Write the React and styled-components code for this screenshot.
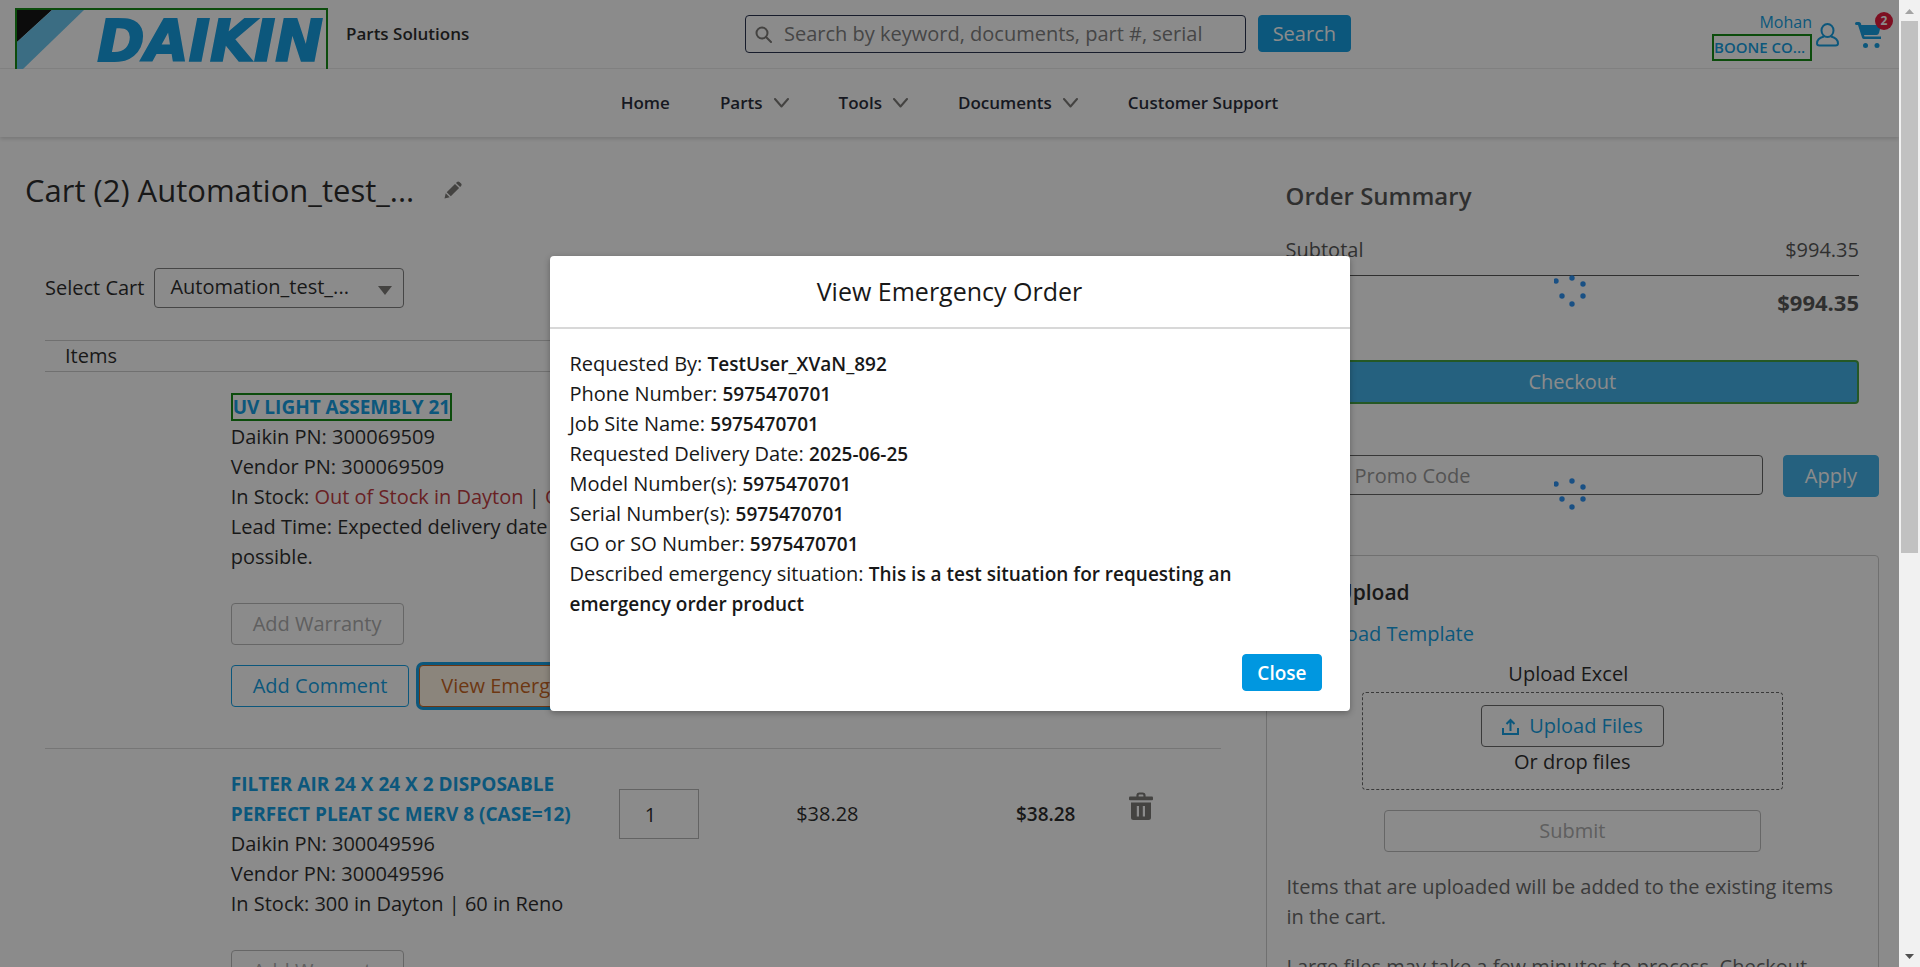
import React from "react";
import styled, { createGlobalStyle } from "styled-components";

const BLUE = "#0097e0";
const INK = "#181818";
const GREEN = "#008000";

const GlobalStyle = createGlobalStyle`
  * { box-sizing: border-box; }
  body { margin: 0; background: #fff; overflow: hidden; }
  body, button, input, select {
    font-family: "Open Sans", "Noto Sans", sans-serif;
    font-size: 20px;
    line-height: 30px;
    color: ${INK};
  }
  h1, h2, h3, p { margin: 0; font-weight: 400; }
  a { color: ${BLUE}; text-decoration: none; }
  strong { font-size: 19px; font-weight: 600; }
`;

const Shell = styled.div`
  display: flex;
  height: 100vh;
  overflow: hidden;
`;
const Page = styled.div`
  position: relative;
  flex: 1;
  min-width: 0;
  overflow: hidden;
`;

/* ---------- header ---------- */
const TopBar = styled.header`
  display: grid;
  grid-template-columns: minmax(0, 745fr) minmax(0, 606fr) minmax(0, 548fr);
  height: 69px;
  border-bottom: 1px solid #ececec;
`;
const Brand = styled.div`
  display: flex;
  gap: 18px;
  padding: 8px 0 0 15px;
  font-size: 17px;
  font-weight: 600;
  line-height: 52px;
`;
const LogoLink = styled.a`
  display: block;
  width: 313px;
  height: 61px;
  border: 2px solid ${GREEN};
  border-bottom: 0;
  svg { display: block; }
`;
const SearchForm = styled.form`
  display: flex;
  align-items: flex-start;
  gap: 12px;
  padding-top: 15px;
`;
const SearchBox = styled.label`
  display: flex;
  align-items: center;
  gap: 12px;
  flex: 1;
  min-width: 0;
  height: 38px;
  padding: 0 38px 0 9px;
  border: 1px solid #16213f;
  border-radius: 4px;
  svg { flex: none; }
`;
const BareInput = styled.input`
  flex: 1;
  min-width: 0;
  padding: 0;
  border: 0;
  outline: 0;
  background: none;
  &::placeholder { color: #747474; opacity: 1; }
`;
const Button = styled.button`
  display: inline-flex;
  align-items: center;
  justify-content: center;
  height: ${(p) => p.$height || 42}px;
  padding: 0 ${(p) => p.$pad || 21}px;
  border: 1px solid ${(p) => p.$border || BLUE};
  border-radius: 4px;
  background: ${(p) => p.$bg || "transparent"};
  color: ${(p) => p.$color || BLUE};
  white-space: nowrap;
`;
const UserArea = styled.div`
  display: flex;
  justify-content: flex-end;
  gap: 4px;
  padding: 11px 18px 0 0;
`;
const UserNames = styled.div`
  display: flex;
  flex-direction: column;
  align-items: flex-end;
  width: 100px;
  font-size: 16px;
  line-height: 23px;
`;
const Account = styled.a`
  width: 100%;
  height: 27px;
  border: 2px solid ${GREEN};
  font-size: 15px;
  font-weight: 600;
`;
const IconLink = styled.a`
  position: relative;
  display: block;
  height: 26px;
  margin: ${(p) => p.$margin};
  svg { display: block; }
`;
const Badge = styled.span`
  position: absolute;
  top: -10px;
  right: -12px;
  width: 18px;
  height: 18px;
  border-radius: 9px;
  background: #e3062b;
  color: #fff;
  font-size: 12px;
  font-weight: 700;
  line-height: 18px;
  text-align: center;
`;
const Nav = styled.nav`
  display: flex;
  align-items: center;
  justify-content: center;
  gap: 50px;
  height: 68px;
  box-shadow: 0 2px 4px rgba(0, 0, 0, 0.16);
`;
const NavItem = styled.a`
  display: flex;
  align-items: center;
  gap: 11px;
  color: #14182a;
  font-size: 17px;
  font-weight: 600;
`;

/* ---------- cart ---------- */
const Main = styled.main`
  display: grid;
  grid-template-columns: minmax(0, 67fr) minmax(0, 33fr);
  padding: 0 20px;
`;
const CartColumn = styled.section`
  padding: 33px 45px 0 25px;
`;
const TitleRow = styled.div`
  display: flex;
  align-items: center;
  gap: 30px;
  margin: 0 0 58px -20px;
`;
const Title = styled.h1`
  font-size: 31px;
  line-height: 40px;
`;
const IconButton = styled.button`
  display: block;
  padding: 0;
  border: 0;
  background: none;
  line-height: 0;
`;
const PickerRow = styled.div`
  display: flex;
  align-items: center;
  gap: 10px;
  margin-bottom: 32px;
`;
const Picker = styled.div`
  position: relative;
  width: 250px;
  svg { position: absolute; right: 12px; top: 18px; pointer-events: none; }
`;
const PickerSelect = styled.select`
  display: block;
  width: 100%;
  height: 40px;
  padding: 0 36px 2px 15px;
  border: 1px solid #747474;
  border-radius: 4px;
  background: transparent;
  appearance: none;
`;
const Items = styled.table`
  width: 100%;
  table-layout: fixed;
  border-collapse: collapse;
  th, td { padding: 0; text-align: left; vertical-align: top; font-weight: 400; }
  thead tr { border-top: 1px solid #c9c9c9; border-bottom: 1px solid #c9c9c9; }
  tbody tr { border-bottom: 1px solid #d4d4d4; }
  th:first-child { padding-left: 20px; }
  thead th { height: 31px; }
`;
const Cell = styled.td`
  && { padding-top: ${(p) => p.$top || 20}px; }
`;
const Details = styled.div`
  margin-bottom: 31px;
  white-space: nowrap;
`;
const ProductLink = styled.a`
  display: inline-block;
  font-size: 19px;
  font-weight: 700;
  line-height: 30px;
  vertical-align: top;
`;
const MarkedLink = styled(ProductLink)`
  height: 28px;
  margin: 1px 0;
  border: 2px solid ${GREEN};
  line-height: 24px;
`;
const Red = styled.span`
  color: #ba2a2f;
`;
const Actions = styled.div`
  display: flex;
  gap: 10px;
  margin-bottom: ${(p) => p.$bottom || 20}px;
`;
const EmergencyButton = styled(Button)`
  box-shadow: 0 0 0 3px ${BLUE};
`;
const Quantity = styled.input`
  display: block;
  width: 80px;
  height: 50px;
  padding: 0 25px;
  border: 1px solid #aeaeae;
  background: transparent;
`;

/* ---------- sidebar ---------- */
const Sidebar = styled.aside`
  padding-top: 23px;
`;
const Busy = styled.div`
  position: absolute;
  inset: 0;
  display: flex;
  align-items: center;
  justify-content: center;
  background: rgba(255, 255, 255, 0.2);
`;
const Summary = styled.section`
  position: relative;
  height: 260px;
  padding: 20px 20px 0;
`;
const SummaryTitle = styled.h2`
  margin-bottom: 23px;
  font-size: 24px;
  font-weight: 600;
  line-height: 32px;
`;
const AmountRow = styled.div`
  display: flex;
  justify-content: space-between;
  padding-bottom: ${(p) => p.$gap || 0}px;
  border-bottom: ${(p) => (p.$rule ? `1px solid ${INK}` : 0)};
`;
const Total = styled.b`
  margin: 11px 0 43px auto;
  font-size: 22px;
  font-weight: 700;
`;
const Checkout = styled(Button)`
  width: 100%;
  border-width: 2px;
`;
const Promo = styled.section`
  position: relative;
  display: flex;
  gap: 20px;
  height: 125px;
  margin-top: 10px;
  padding: 25px 0 0 20px;
`;
const PromoInput = styled.input`
  flex: 1;
  min-width: 0;
  height: 40px;
  padding: 0 16px 0 68px;
  border: 1px solid #2e2e2e;
  border-radius: 4px;
  background: transparent;
  &::placeholder { color: #747474; opacity: 1; }
`;
const UploadCard = styled.section`
  display: flex;
  flex-direction: column;
  align-items: stretch;
  padding: 21px 20px 20px;
  border: 1px solid #c9c9c9;
  border-radius: 4px;
`;
const UploadTitle = styled.h3`
  margin-bottom: 12px;
  font-size: 21px;
  font-weight: 600;
`;
const UploadLabel = styled.div`
  margin-top: 10px;
  padding-right: 8px;
  text-align: center;
`;
const DropZone = styled.div`
  display: flex;
  flex-direction: column;
  align-items: center;
  height: 98px;
  margin: 3px 75px 20px;
  padding-top: 12px;
  border: 1px dashed #5c5c5c;
  border-radius: 4px;
`;
const Submit = styled(Button)`
  margin: 0 97px 20px;
`;
const Note = styled.p`
  margin-bottom: 20px;
  padding-right: 20px;
  color: #5c5c5c;
`;

/* ---------- modal ---------- */
const Backdrop = styled.div`
  position: absolute;
  inset: 0;
  display: flex;
  align-items: center;
  justify-content: center;
  background: rgba(24, 24, 24, 0.5);
`;
const Dialog = styled.div`
  width: 800px;
  max-width: 90%;
  border-radius: 4px;
  background: #fff;
  box-shadow: 0 2px 6px rgba(0, 0, 0, 0.3);
`;
const DialogTitle = styled.h2`
  padding: 20px 0 21px;
  border-bottom: 2px solid #d8d8d8;
  font-size: 25px;
  text-align: center;
`;
const DialogBody = styled.div`
  padding: 20px 20px 0;
`;
const DialogFooter = styled.div`
  display: flex;
  justify-content: flex-end;
  padding: 35px 28px 20px 0;
`;
const CloseButton = styled(Button)`
  font-size: 19px;
  font-weight: 600;
`;

/* ---------- scroll bar ---------- */
const ScrollTrack = styled.div`
  display: flex;
  flex-direction: column;
  align-items: center;
  width: 21px;
  padding: 9px 2px 8px;
  background: #f1f1f1;
  svg { flex: none; }
`;
const ScrollThumb = styled.div`
  width: 17px;
  height: 56%;
  margin: 7px 0 auto;
  background: #c1c1c1;
`;

const Chevron = () => (
  <svg width="15" height="10" viewBox="0 0 15 10" fill="none" stroke="#706e6b" strokeWidth="2">
    <path d="M1 1l6.500 7.500L14 1" strokeLinecap="round" strokeLinejoin="round" />
  </svg>
);

const Logo = () => (
  <svg width="309" height="59" viewBox="0 0 309 59" aria-label="Daikin">
    <path d="M0 0h35L0 32z" fill="#000" />
    <path d="M35 0h32L6 59H0V32z" fill="#5ec3ee" />
    <text
      x="306"
      y="51"
      textAnchor="end"
      fontFamily="DejaVu Sans"
      fontWeight="700"
      fontStyle="italic"
      fontSize="57"
      fill={BLUE}
      stroke={BLUE}
      strokeWidth="2"
    >
      DAIKIN
    </text>
  </svg>
);

const Spinner = () => (
  <Busy>
    <svg width="36" height="36" viewBox="-18 -18 36 36" fill="#1b88f0">
      <circle cx="-16" cy="-9" r="2.700" />
      <circle cx="0" cy="-12" r="2.700" />
      <circle cx="11" cy="-6" r="2.700" />
      <circle cx="11" cy="6" r="2.700" />
      <circle cx="0" cy="14" r="2.700" />
      <circle cx="-10" cy="6" r="2.700" />
    </svg>
  </Busy>
);

const Trash = () => (
  <svg width="24" height="28" viewBox="0 0 24 28">
    <path d="M8.500 5V3.500a2 2 0 0 1 2-2h3a2 2 0 0 1 2 2V5" fill="none" stroke="#706e6b" strokeWidth="2.200" />
    <rect x="0" y="4.500" width="24" height="3.800" rx="1" fill="#706e6b" />
    <path
      fillRule="evenodd"
      d="M2 10.500h20V25.500a2.500 2.500 0 0 1-2.500 2.500h-15A2.500 2.500 0 0 1 2 25.500zM7.800 14v10.500h2.200V14zM13.800 14v10.500H16V14z"
      fill="#706e6b"
    />
  </svg>
);

const navItems = [
  ["Home", false],
  ["Parts", true],
  ["Tools", true],
  ["Documents", true],
  ["Customer Support", false],
];

const request = [
  ["Requested By:", "TestUser_XVaN_892"],
  ["Phone Number:", "5975470701"],
  ["Job Site Name:", "5975470701"],
  ["Requested Delivery Date:", "2025-06-25"],
  ["Model Number(s):", "5975470701"],
  ["Serial Number(s):", "5975470701"],
  ["GO or SO Number:", "5975470701"],
  ["Described emergency situation:", "This is a test situation for requesting an emergency order product"],
];

function AmountCells({ price, name }) {
  return (
    <>
      <Cell $top={40}>
        <Quantity defaultValue="1" aria-label={`Quantity of ${name}`} />
      </Cell>
      <Cell $top={50}>{price}</Cell>
      <Cell $top={50}>
        <strong>{price}</strong>
      </Cell>
      <Cell $top={43}>
        <IconButton aria-label={`Remove ${name}`}>
          <Trash />
        </IconButton>
      </Cell>
    </>
  );
}

function WarrantyAction() {
  return (
    <Actions>
      <Button $border="#b4b4b4" $color="#a6a6a6">Add Warranty</Button>
    </Actions>
  );
}

function Header() {
  return (
    <>
      <TopBar>
        <Brand>
          <LogoLink href="#home"><Logo /></LogoLink>
          <span>Parts Solutions</span>
        </Brand>
        <SearchForm>
          <SearchBox>
            <svg width="17" height="17" viewBox="0 0 17 17" fill="none" stroke="#706e6b" strokeWidth="2">
              <circle cx="7" cy="7" r="5.500" />
              <path d="M11 11l5 5" strokeLinecap="round" />
            </svg>
            <BareInput
              type="text"
              aria-label="Search"
              placeholder="Search by keyword, documents, part #, serial #"
            />
          </SearchBox>
          <Button type="button" $height={37} $pad={14} $bg={BLUE} $color="#fff">Search</Button>
        </SearchForm>
        <UserArea>
          <UserNames>
            <a href="#user">Mohan</a>
            <Account href="#account">BOONE CO...</Account>
          </UserNames>
          <IconLink href="#profile" aria-label="Profile" $margin="12px 12px 0 0">
            <svg width="23" height="24" viewBox="0 0 23 24" fill="none" stroke={BLUE} strokeWidth="2">
              <ellipse cx="11.500" cy="7.500" rx="6" ry="6.500" />
              <path d="M8 13.500C4 14.500 1 17 1 20.500 1 22 2 22.500 3.500 22.500h16c1.500 0 2.500-.5 2.500-2 0-3.500-3-6-7-7" />
            </svg>
          </IconLink>
          <IconLink href="#cart" aria-label="Cart" $margin="11px 0 0 0">
            <svg width="26" height="26" viewBox="0 0 26 26" fill={BLUE}>
              <path d="M0 1.500Q0 0 1.500 0H4q1.500 0 2 1.500L6.300 3H26l-2 8q-.5 2-2.500 2H9l.5 1.500H26V17H9q-1.500 0-2-1.500L3 3H1.500Q0 3 0 1.500z" />
              <circle cx="10.500" cy="23.500" r="2.500" />
              <circle cx="22" cy="23.500" r="2.500" />
            </svg>
            <Badge>2</Badge>
          </IconLink>
        </UserArea>
      </TopBar>
      <Nav>
        {navItems.map(([label, menu]) => (
          <NavItem key={label} href="#menu">
            {label}
            {menu && <Chevron />}
          </NavItem>
        ))}
      </Nav>
    </>
  );
}

function Cart() {
  return (
    <CartColumn>
      <TitleRow>
        <Title>Cart (2) Automation_test_...</Title>
        <IconButton aria-label="Rename cart">
          <svg width="18" height="18" viewBox="0 0 18 18" fill="#706e6b">
            <path d="M0.500 17.500l1.200-5.200 4 4zM2.700 11.200L11 2.900l4.100 4.100-8.300 8.300zM12 1.900l1-1q1.200-1 2.400 0l1.700 1.700q1 1.200 0 2.400l-1 1z" />
          </svg>
        </IconButton>
      </TitleRow>
      <PickerRow>
        <label htmlFor="cart-picker">Select Cart</label>
        <Picker>
          <PickerSelect id="cart-picker">
            <option>Automation_test_...</option>
          </PickerSelect>
          <svg width="14" height="9" viewBox="0 0 14 9" fill="#706e6b"><path d="M0 0h14L7 9z" /></svg>
        </Picker>
      </PickerRow>
      <Items>
        <colgroup>
          <col style={{ width: "15.8%" }} />
          <col style={{ width: "33%" }} />
          <col style={{ width: "15.1%" }} />
          <col style={{ width: "18.7%" }} />
          <col style={{ width: "9.6%" }} />
          <col />
        </colgroup>
        <thead>
          <tr>
            <th colSpan={2}>Items</th>
            <th>Qty</th>
            <th>Price</th>
            <th>Total</th>
            <th />
          </tr>
        </thead>
        <tbody>
          <tr>
            <td />
            <Cell>
              <Details>
                <MarkedLink href="#item">UV LIGHT ASSEMBLY 21</MarkedLink>
                <div>Daikin PN: 300069509</div>
                <div>Vendor PN: 300069509</div>
                <div>In Stock: <Red>Out of Stock in Dayton</Red> | <Red>Out of Stock in Reno</Red></div>
                <div>Lead Time: Expected delivery date is not<br />possible.</div>
              </Details>
              <WarrantyAction />
              <Actions $bottom={41}>
                <Button>Add Comment</Button>
                <EmergencyButton $border="#c2570c" $color="#c2570c" $bg="#fff3e0">
                  View Emergency Order
                </EmergencyButton>
              </Actions>
            </Cell>
            <AmountCells price="$956.07" name="UV light assembly" />
          </tr>
          <tr>
            <td />
            <Cell>
              <Details>
                <ProductLink href="#item">
                  FILTER AIR 24 X 24 X 2 DISPOSABLE<br />PERFECT PLEAT SC MERV 8 (CASE=12)
                </ProductLink>
                <div>Daikin PN: 300049596</div>
                <div>Vendor PN: 300049596</div>
                <div>In Stock: 300 in Dayton | 60 in Reno</div>
              </Details>
              <WarrantyAction />
            </Cell>
            <AmountCells price="$38.28" name="air filter" />
          </tr>
        </tbody>
      </Items>
    </CartColumn>
  );
}

function OrderPanel() {
  return (
    <Sidebar>
      <Summary>
        <SummaryTitle>Order Summary</SummaryTitle>
        <AmountRow $rule $gap={10}>
          <span>Subtotal</span>
          <span>$994.35</span>
        </AmountRow>
        <AmountRow>
          <Total>$994.35</Total>
        </AmountRow>
        <Checkout $height={44} $border={GREEN} $bg={BLUE} $color="#fff">Checkout</Checkout>
        <Spinner />
      </Summary>
      <Promo>
        <PromoInput aria-label="Promo Code" placeholder="Promo Code" />
        <Button $bg={BLUE} $color="#fff">Apply</Button>
        <Spinner />
      </Promo>
      <UploadCard>
        <UploadTitle>Bulk Upload</UploadTitle>
        <a href="#template">Download Template</a>
        <UploadLabel>Upload Excel</UploadLabel>
        <DropZone>
          <Button $border="#5c5c5c" $pad={20}>
            <svg width="17" height="17" viewBox="0 0 17 17" fill="none" stroke={BLUE} strokeWidth="2">
              <path d="M1 10v6h15v-6M8.500 13V2M4.500 6l4-4 4 4" />
            </svg>
            &nbsp;&nbsp;Upload Files
          </Button>
          <span>Or drop files</span>
        </DropZone>
        <Submit $border="#b4b4b4" $color="#a6a6a6">Submit</Submit>
        <Note>Items that are uploaded will be added to the existing items in the cart.</Note>
        <Note>Large files may take a few minutes to process. Checkout will be available once complete.</Note>
      </UploadCard>
    </Sidebar>
  );
}

export default function App() {
  return (
    <>
      <GlobalStyle />
      <Shell>
        <Page>
          <Header />
          <Main>
            <Cart />
            <OrderPanel />
          </Main>
          <Backdrop>
            <Dialog role="dialog" aria-labelledby="dialog-title">
              <DialogTitle id="dialog-title">View Emergency Order</DialogTitle>
              <DialogBody>
                {request.map(([label, value]) => (
                  <p key={label}>
                    {label} <strong>{value}</strong>
                  </p>
                ))}
              </DialogBody>
              <DialogFooter>
                <CloseButton $height={37} $pad={14} $bg={BLUE} $color="#fff">Close</CloseButton>
              </DialogFooter>
            </Dialog>
          </Backdrop>
        </Page>
        <ScrollTrack aria-hidden="true">
          <svg width="9" height="5" viewBox="0 0 9 5" fill="#a3a3a3"><path d="M0 5h9L4.500 0z" /></svg>
          <ScrollThumb />
          <svg width="9" height="5" viewBox="0 0 9 5" fill="#505050"><path d="M0 0h9L4.500 5z" /></svg>
        </ScrollTrack>
      </Shell>
    </>
  );
}
